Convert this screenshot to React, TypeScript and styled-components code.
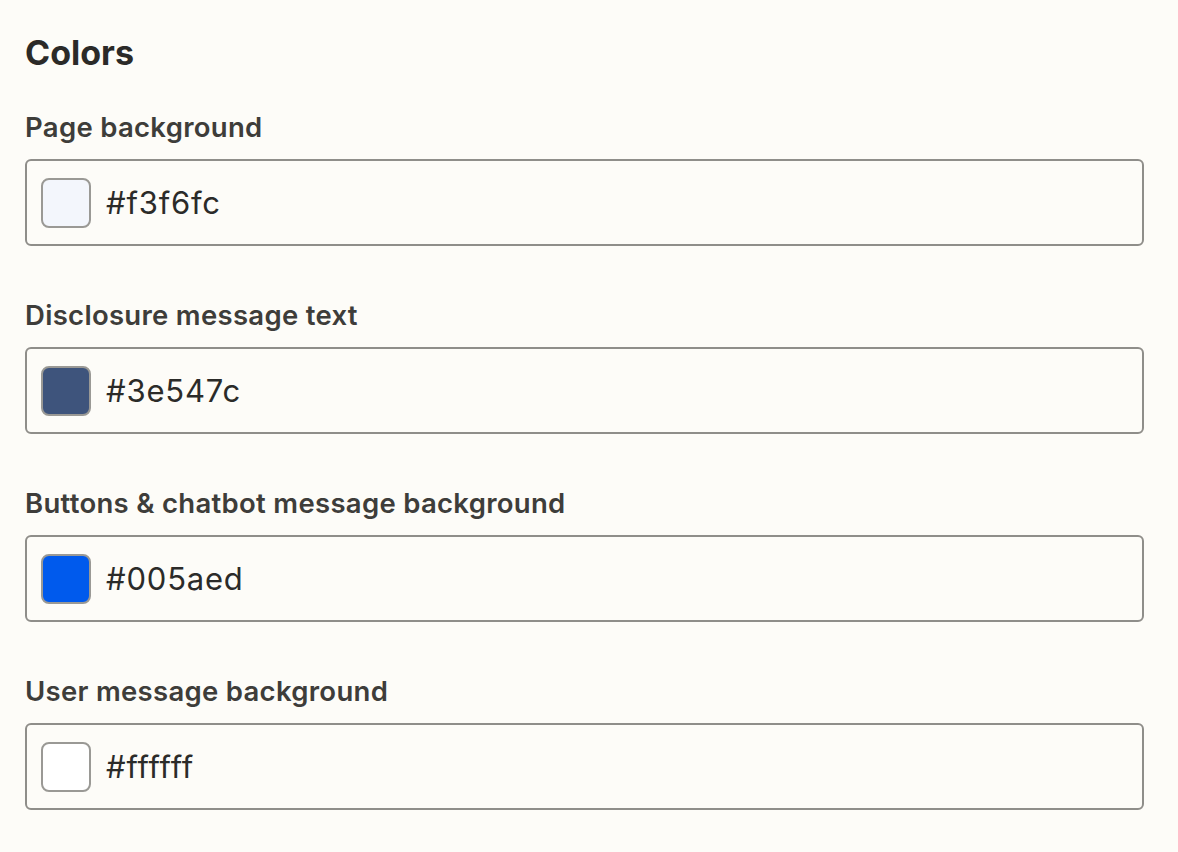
import React from "react";
import styled, { createGlobalStyle } from "styled-components";

const Global = createGlobalStyle`
  html, body { margin: 0; padding: 0; background: #fdfcf8; }
  body { font-family: Inter, "Noto Sans", sans-serif; }
`;

const Page = styled.div`
  padding: 33px 34px 0 25px;
  display: flex;
  flex-direction: column;
`;

const Heading = styled.h2`
  margin: 0 0 37px;
  font-size: 34px;
  line-height: 40px;
  font-weight: 700;
  color: #2b2a28;
`;

const Field = styled.div`
  display: flex;
  flex-direction: column;
  gap: 15px;
  margin-bottom: 52px;
`;

const Label = styled.label`
  font-size: 27.5px;
  line-height: 34px;
  font-weight: 600;
  letter-spacing: 0.3px;
  color: #3e3d3a;
`;

const InputBox = styled.div`
  box-sizing: border-box;
  height: 87px;
  border: 2px solid #8f8e8a;
  border-radius: 6px;
  display: flex;
  align-items: center;
  gap: 15px;
  padding: 0 14px;
  background: #fdfcf8;
`;

const Swatch = styled.div<{ $color: string }>`
  box-sizing: border-box;
  width: 50px;
  height: 50px;
  border: 2px solid #9a9995;
  border-radius: 8px;
  background: ${(p) => p.$color};
`;

const Value = styled.span`
  font-size: 31px;
  letter-spacing: 0.8px;
  color: #2b2b29;
`;

const fields = [
  { label: "Page background", color: "#f3f6fc" },
  { label: "Disclosure message text", color: "#3e547c" },
  { label: "Buttons & chatbot message background", color: "#005aed" },
  { label: "User message background", color: "#ffffff" },
];

export default function App() {
  return (
    <>
      <Global />
      <Page>
        <Heading>Colors</Heading>
        {fields.map((f) => (
          <Field key={f.label}>
            <Label>{f.label}</Label>
            <InputBox>
              <Swatch $color={f.color} />
              <Value>{f.color}</Value>
            </InputBox>
          </Field>
        ))}
      </Page>
    </>
  );
}
